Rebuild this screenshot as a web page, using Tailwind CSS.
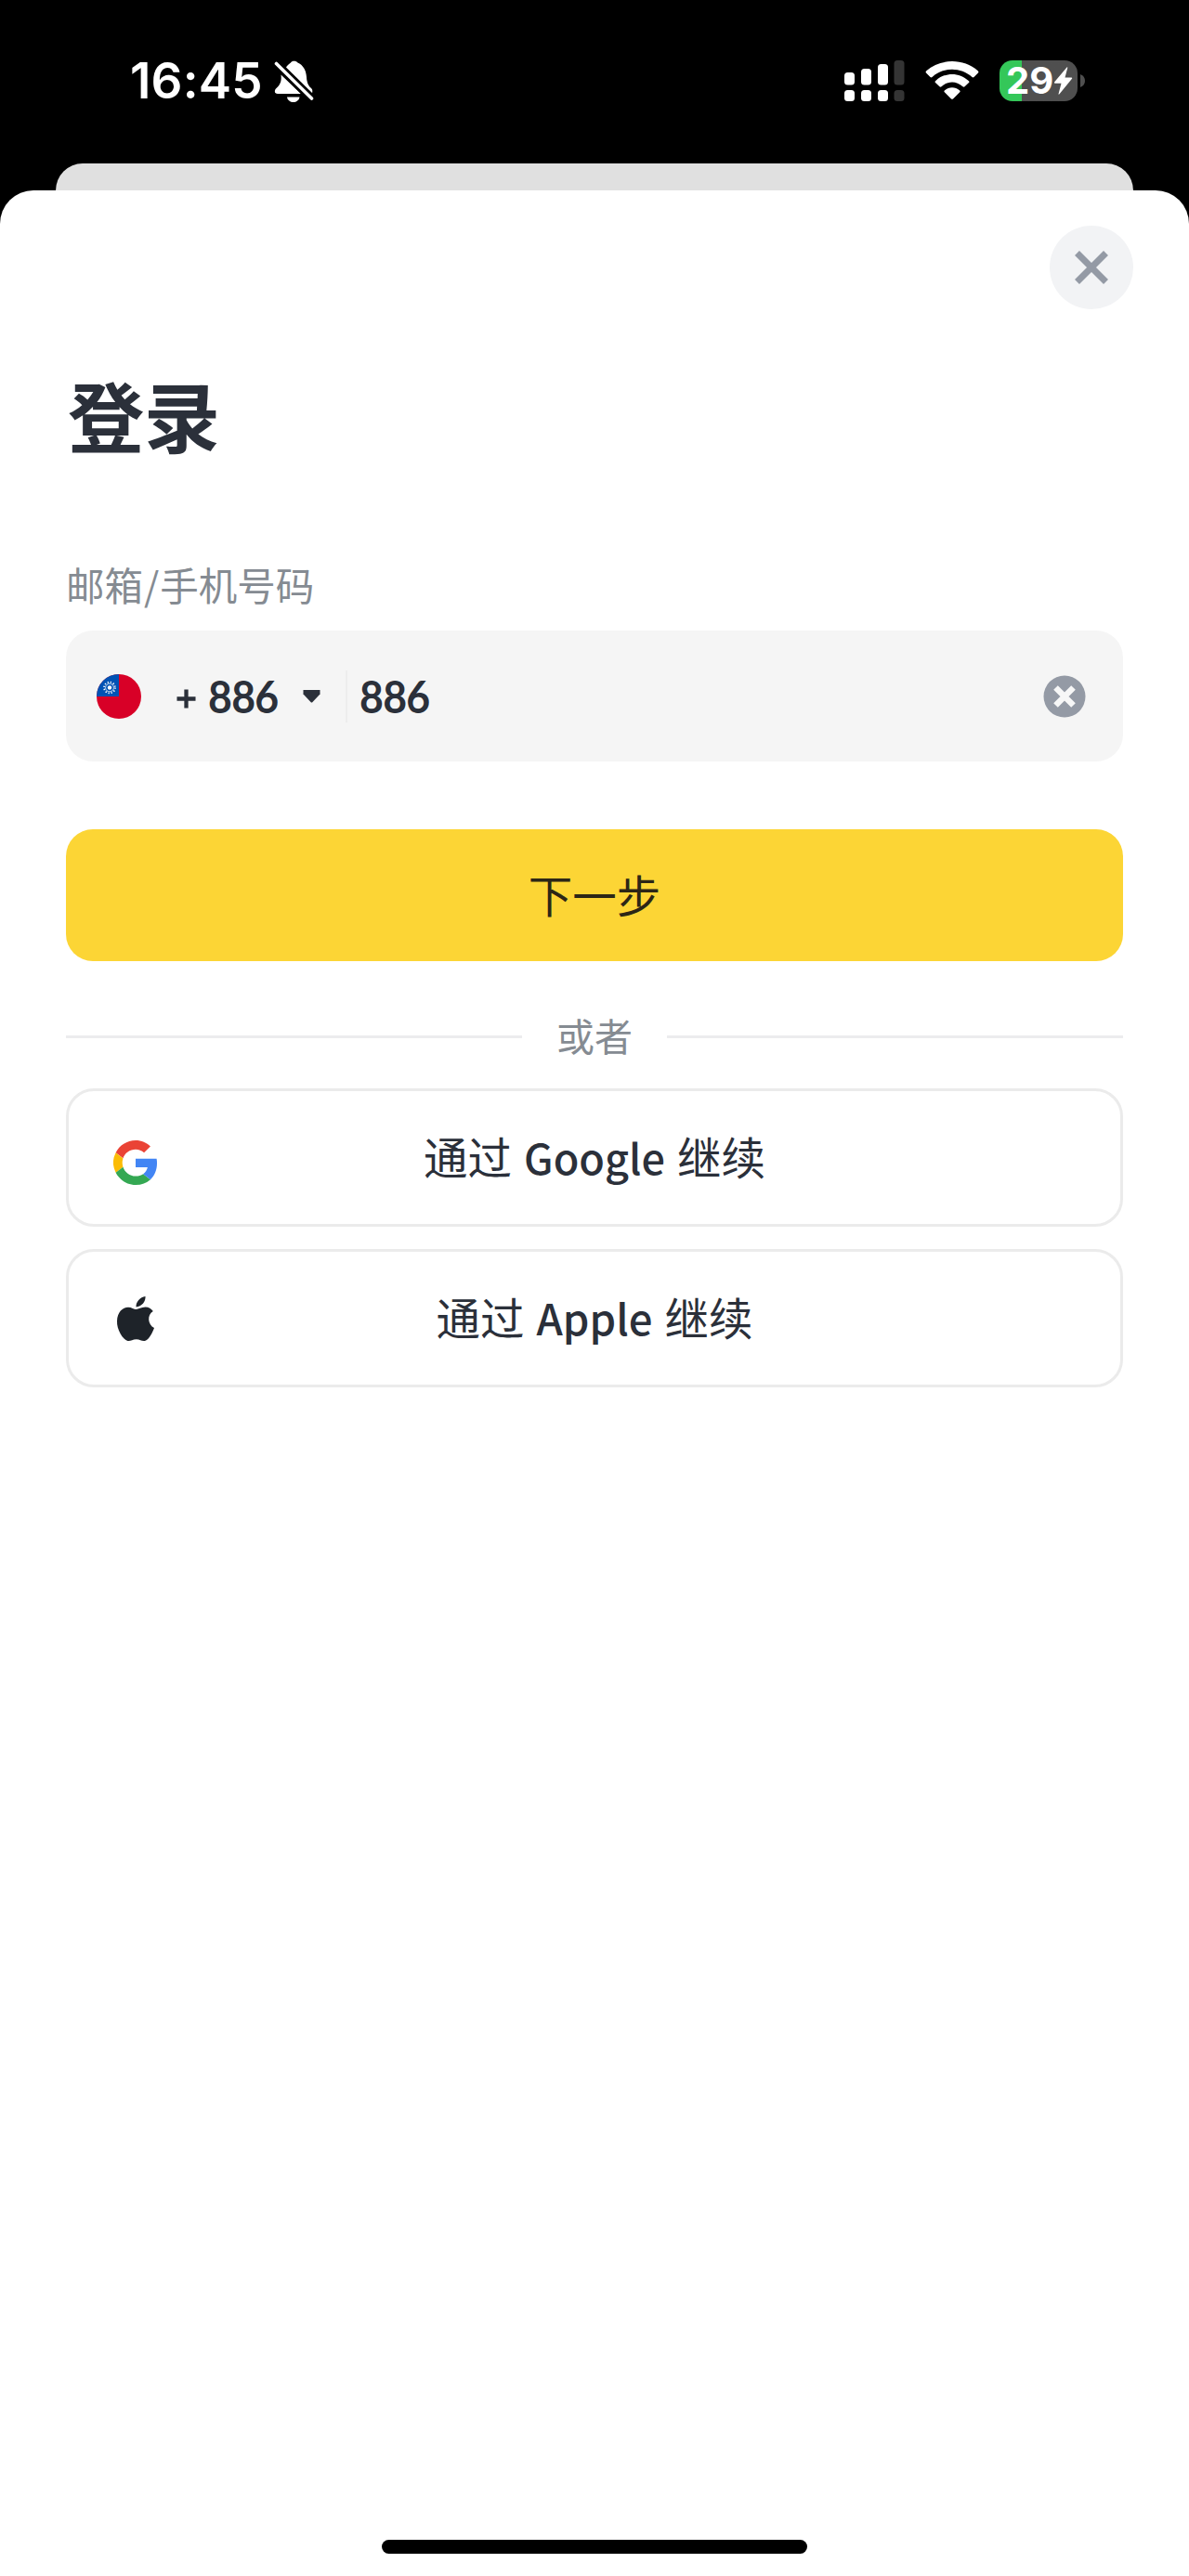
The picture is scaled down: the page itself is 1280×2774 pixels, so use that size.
<!DOCTYPE html>
<html lang="zh-CN">
<head>
<meta charset="utf-8">
<title>登录</title>
<script src="https://cdn.jsdelivr.net/npm/@tailwindcss/browser@4"></script>
</head>
<body class="flex h-[2774px] w-[1280px] flex-col overflow-hidden bg-black font-['Noto_Sans_CJK_SC',sans-serif] text-[#2b303a]">
  <!-- Status bar -->
  <header class="flex h-[176px] items-start justify-between pl-[140px] pr-[112px] pt-[56px] text-white">
    <div class="flex h-[62px] items-center">
      <span class="w-[155px] whitespace-nowrap font-['Inter',sans-serif] text-[53px] font-semibold leading-[62px] tracking-[0.2px]">16:45</span>
      <svg class="h-[48px] w-[44px]" viewBox="0 0 44 48" fill="#fff">
        <path d="M12.500 10.500C14 7 16.500 6 18 4.500C19 2 24 2 25.500 4.500C31 7 34.500 12 35 20C35.300 26 37 29.500 40.500 32.500C41.500 34 41.500 35 41 37.500Z"/>
        <path d="M7.500 17.500L29 38H4C0 38 .2 34 2.500 32C7 28 8.300 24 7.500 17.500Z"/>
        <path d="M14 41.500H27.500C26.500 48.800 15 48.800 14 41.500Z"/>
        <path d="M3 6L40.500 43" stroke="#000" stroke-width="9"/>
        <path d="M2.500 5.500L40.500 43" stroke="#fff" stroke-width="3.600" stroke-linecap="round"/>
      </svg>
    </div>
    <div class="flex h-[62px] items-center">
      <svg class="h-[46px] w-[66px]" viewBox="908 63 66 46" fill="#fff">
        <rect x="909" y="77" width="11" height="13.500" rx="3.500"/><rect x="927" y="73" width="11" height="17.500" rx="3.500"/><rect x="945" y="68" width="11" height="22.500" rx="3.500"/><rect x="962.500" y="64" width="11" height="26.500" rx="3.500" fill="#343434"/>
        <rect x="909" y="96" width="11" height="12" rx="3.500"/><rect x="927" y="96" width="11" height="12" rx="3.500"/><rect x="945" y="96" width="11" height="12" rx="3.500"/><rect x="962.500" y="96" width="11" height="12" rx="3.500" fill="#343434"/>
      </svg>
      <svg class="ml-[21px] h-[46px] w-[60px]" viewBox="994.500 63 60 46" fill="#fff">
        <path d="M996.500 77.500Q995.500 76.500 996.800 75.200C1012 61.700 1037 61.700 1052.200 75.200Q1053.500 76.500 1052.500 77.500L1048 82Q1047 82.800 1046 82C1034 71 1015 71 1003 82Q1002 82.800 1001 82Z"/>
        <path d="M1006.500 88Q1005.500 87 1006.800 86C1017 76.500 1032 76.500 1042.200 86Q1043.500 87 1042.500 88L1038 92.300Q1037 93 1036 92.300C1029 86 1020 86 1013 92.300Q1012 93 1011 92.300Z"/>
        <path d="M1016.300 98.200Q1015.300 97.200 1016.600 96.200C1021 92.300 1028 92.300 1032.400 96.200Q1033.700 97.200 1032.700 98.200L1025.500 105.400Q1024.500 106.300 1023.500 105.400Z"/>
      </svg>
      <div class="ml-[21px] flex items-center">
        <div class="flex h-[44px] w-[84px] items-center rounded-[14px] bg-linear-to-r from-[#34c759] from-[24.5px] to-[#4f4f4f] to-[24.5px] pl-[7px]">
          <span class="w-[51px] whitespace-nowrap font-['Inter',sans-serif] text-[40px] font-bold leading-[50px]">29</span>
          <svg class="h-[32px] w-[21px]" viewBox="0 0 21 32" fill="#fff"><path d="M14.500 1.500Q15.500 .8 15.200 2.200L12.500 12.500H19.500Q20.800 12.700 20 13.800L6.500 30.300Q5.300 31.300 5.600 29.800L8.500 18.800H1.800Q.4 18.500 1.200 17.300Z"/></svg>
        </div>
        <svg class="ml-[3px] h-[14px] w-[5px]" viewBox="0 0 5 14"><path d="M0 0Q5 2 5 7Q5 12 0 14Z" fill="#4f4f4f"/></svg>
      </div>
    </div>
  </header>

  <div class="flex flex-col bg-black">
    <div class="mx-[60px] h-[29px] rounded-t-[29px] bg-[#e0e0e0]"></div>
  </div>

  <!-- Login sheet -->
  <main class="flex flex-1 flex-col rounded-t-[36px] bg-white px-[71px] pt-[38px]">
    <button class="-mr-[11px] flex size-[90px] items-center justify-center self-end rounded-full bg-[#f2f3f5]">
      <svg class="size-[40px]" viewBox="0 0 40 40"><path d="M4.500 4.500L35.500 35.500M35.500 4.500L4.500 35.500" stroke="#949aa5" stroke-width="7"/></svg>
    </button>

    <h1 class="ml-[2px] mt-[53px] h-[120px] whitespace-nowrap text-[82px] font-bold leading-[120px]">登录</h1>

    <label class="mt-[93px] block h-[60px] whitespace-nowrap text-[41.5px] leading-[60px] text-[#858b92]">邮箱<span class="mx-[1px] inline-block">/</span>手机号码</label>

    <div class="mt-[20px] flex h-[141px] items-center rounded-[29px] bg-[#f5f5f5] pl-[33px] pr-[40px]">
      <svg class="size-[48px]" viewBox="0 0 48 48">
        <clipPath id="disc"><circle cx="24" cy="24" r="24"/></clipPath>
        <g clip-path="url(#disc)"><path fill="#d80027" d="M0 0H48V48H0Z"/><path fill="#0052b4" d="M0 0H24V24H0Z"/></g>
        <circle cx="14" cy="14.500" r="2.200" fill="#fff"/>
        <circle cx="14" cy="14.500" r="4.400" fill="none" stroke="#fff" stroke-width=".8"/>
        <circle cx="14" cy="14.500" r="6" fill="none" stroke="#fff" stroke-width="1.600" stroke-dasharray="1.300 1.842"/>
      </svg>
      <svg class="ml-[38px] mt-[6px] size-[21px]" viewBox="0 0 22 22"><path d="M0.500 11H21.500M11 .5V21.500" stroke="#2b303a" stroke-width="4.500"/></svg>
      <span class="ml-[13px] w-[102px] origin-left scale-x-95 whitespace-nowrap font-['Lato',sans-serif] text-[47px] font-bold leading-[60px] tracking-[-0.8px]">886</span>
      <svg class="h-[14px] w-[19px]" viewBox="0 0 19 14"><path d="M.5 0H18.500V4.500L10.500 13Q9.500 14 8.500 13L.5 4.500Z" fill="#2b303a"/></svg>
      <div class="ml-[27px] h-[56px] w-[2px] bg-[#ededed]"></div>
      <span class="ml-[13px] origin-left scale-x-95 whitespace-nowrap font-['Lato',sans-serif] text-[47px] font-bold leading-[60px] tracking-[-0.8px]">886</span>
      <svg class="ml-auto size-[46px]" viewBox="0 0 46 46"><circle cx="23" cy="23" r="22.500" fill="#949aa5"/><path d="M13.500 13.500L32.500 32.500M32.500 13.500L13.500 32.500" stroke="#f7f7f7" stroke-width="6.500"/></svg>
    </div>

    <button class="mt-[73px] flex h-[142px] items-center justify-center rounded-[29px] bg-[#fcd535] pb-[2px] text-[47.5px] leading-[70px] text-[#2c2616]">下一步</button>

    <div class="mt-[45px] flex h-[72px] items-center">
      <div class="h-[3px] flex-1 bg-[#ececee]"></div>
      <span class="-mt-[4px] w-[156px] text-center text-[41px] leading-[60px] text-[#858b92]">或者</span>
      <div class="h-[3px] flex-1 bg-[#ececee]"></div>
    </div>

    <button class="mt-[20px] flex h-[149px] items-center rounded-[30px] border-[3px] border-[#ebebeb] px-[48px]">
      <svg class="mt-[10px] size-[48px]" viewBox="2 2 44 44">
        <path fill="#ea4335" d="M24 11c3.200 0 6.100 1.100 8.300 3.200l6.300-6.200C34.800 4.300 29.800 2 24 2 15.400 2 8 7 4.400 14.100l7.200 5.600C13.300 14.700 18.200 11 24 11z"/>
        <path fill="#fbbc05" d="M11.600 28.300a13.200 13.200 0 0 1 0-8.500l-7.200-5.700a22 22 0 0 0 0 19.800z"/>
        <path fill="#34a853" d="M24 46c5.900 0 10.900-2 14.600-5.300l-7.100-5.500c-2 1.300-4.500 2.100-7.500 2.100-5.800 0-10.700-3.900-12.400-9l-7.200 5.600C8 41 15.400 46 24 46z"/>
        <path fill="#4285f4" d="M45.100 24.500c0-1.600-.1-3.100-.4-4.500H24v8.500h11.800c-.5 2.700-2 5-4.300 6.700l7.100 5.500c4.100-3.800 6.500-9.500 6.500-16.200z"/>
      </svg>
      <span class="mr-[48px] flex flex-1 items-baseline justify-center gap-[13px] whitespace-nowrap pb-[3px] text-[47.5px] leading-[70px]"><span>通过</span><span class="text-[45px] font-medium">Google</span><span>继续</span></span>
    </button>

    <button class="mt-[24px] flex h-[149px] items-center rounded-[30px] border-[3px] border-[#ebebeb] px-[48px]">
      <svg class="mx-[3px] h-[50px] w-[42px]" viewBox="0 0 42 50" fill="#1e2329">
        <path d="M31.500 1C32 6.500 27.500 12 21.500 12.500C21 7 26 1.800 31.500 1Z"/>
        <path d="M21.500 15C24 15 27 12.500 31.500 12.500C35 12.500 38 14.300 39.800 17C33 21 34 31.500 41 35C39.500 39.500 35.500 47.500 31.500 48.800C28 49.800 26 47.200 21.800 47.200C17.500 47.200 15.500 49.600 12.500 49C7 47.500 .5 36.500 1 27.500C1.300 18 7 12.700 13 12.700C16.500 12.700 19.500 15 21.500 15Z"/>
      </svg>
      <span class="mr-[48px] flex flex-1 items-baseline justify-center gap-[13px] whitespace-nowrap pb-[3px] text-[47.5px] leading-[70px]"><span>通过</span><span class="text-[45.5px] font-medium">Apple</span><span>继续</span></span>
    </button>

    <div class="mb-[24px] mt-auto h-[15px] w-[458px] self-center rounded-full bg-black"></div>
  </main>
</body>
</html>
